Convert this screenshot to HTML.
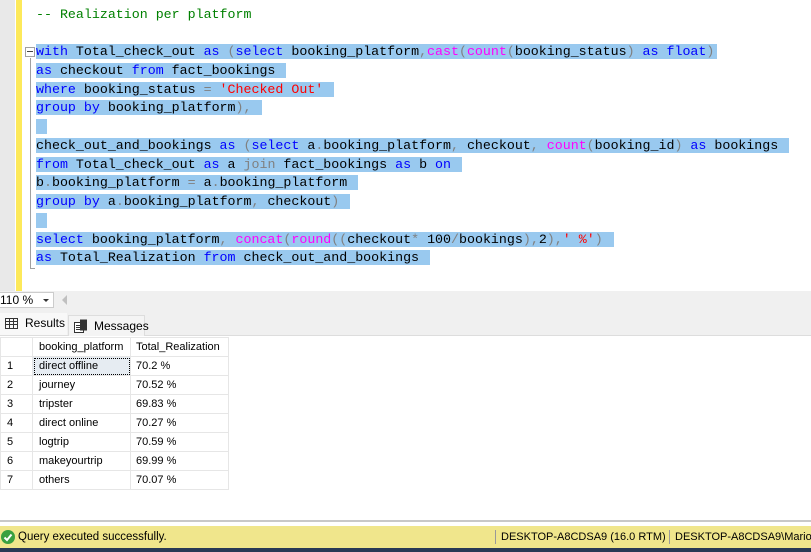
<!DOCTYPE html>
<html><head><meta charset="utf-8"><style>
*{margin:0;padding:0;box-sizing:border-box}
body{width:811px;height:552px;overflow:hidden;background:#fff;position:relative;font-family:"Liberation Sans",sans-serif}
.gut{position:absolute;left:0;top:0;width:15px;height:291px;background:#e9e9e9}
.yel{position:absolute;left:16px;top:0;width:6px;height:291px;background:#fde95a}
.vl{position:absolute;left:30px;top:58px;width:1px;height:211px;background:#a0a0a0}
.tick{position:absolute;left:30px;top:268px;width:5px;height:1px;background:#a0a0a0}
.box{position:absolute;left:25px;top:47px;width:10px;height:10px;border:1px solid #a0a0a0;background:#fff}
.box:after{content:"";position:absolute;left:1px;top:3px;width:6px;height:1px;background:#444}
.code{position:absolute;left:36px;top:5.5px;font-family:"Liberation Mono",monospace;font-size:13.3px;line-height:18.75px;color:#000}
.code div{height:18.75px;white-space:pre}
.s{background:#99c9ef;padding-right:3px}
.k{color:#0000ff}.f{color:#ff00ff}.g{color:#808080}.r{color:#ff0000}.c{color:#008000}
.zb{position:absolute;left:0;top:291px;width:811px;height:18px;background:#f0f0f0}
.combo{position:absolute;left:0;top:292px;width:54px;height:16px;background:#fff;border:1px solid #ccc;border-left:none;font-size:12px;line-height:14px}
.combo b{position:absolute;right:4px;top:6px;border-left:3px solid transparent;border-right:3px solid transparent;border-top:3px solid #333}
.tabs{position:absolute;left:0;top:309px;width:811px;height:27px;background:#f0f0f0;border-bottom:1px solid #ddd}
.tab{position:absolute;top:4px;height:22px;font-size:12px;line-height:20px}
.t1{left:0;width:67px;background:#f8f8f8;padding-left:25px}
.t2{left:68px;width:77px;top:6px;height:21px;background:#f4f4f4;border:1px solid #ddd;border-bottom:none;padding-left:25px}
table{position:absolute;left:0;top:337px;border-collapse:collapse;font-size:11px}
td{height:19px;border:1px solid #e6e6e6;padding-left:5px;color:#000;white-space:nowrap}
td:first-child{width:32px;padding-left:6px}
td:nth-child(2){width:98px;padding-left:6px}
td:nth-child(3){width:98px}
.sel{outline:1px dotted #000;outline-offset:-2px;background:#e6ecf2}
.sep{position:absolute;left:0;top:520px;width:811px;height:2px;background:#c8c8c8}
.st{position:absolute;left:0;top:526px;width:811px;height:22px;background:#f0e68c;font-size:11.5px;line-height:22px;overflow:hidden}
.st span{white-space:nowrap}
.dk{position:absolute;left:0;top:548px;width:811px;height:4px;background:#293955}
.chk{position:absolute;left:1px;top:4px;width:14px;height:14px;border-radius:50%;background:#3aa040}
</style></head><body>
<div class="gut"></div><div class="yel"></div><div class="vl"></div><div class="tick"></div><div class="box"></div>
<div class="code"><div><span class="c">-- Realization per platform</span></div><div></div><div><span class="s"><span class="k">with</span> Total_check_out <span class="k">as</span> <span class="g">(</span><span class="k">select</span> booking_platform<span class="g">,</span><span class="f">cast</span><span class="g">(</span><span class="f">count</span><span class="g">(</span>booking_status<span class="g">)</span> <span class="k">as</span> <span class="k">float</span><span class="g">)</span></span></div><div><span class="s"><span class="k">as</span> checkout <span class="k">from</span> fact_bookings </span></div><div><span class="s"><span class="k">where</span> booking_status <span class="g">=</span> <span class="r">'Checked Out'</span> </span></div><div><span class="s"><span class="k">group</span> <span class="k">by</span> booking_platform<span class="g">),</span> </span></div><div><span class="s"> </span></div><div><span class="s">check_out_and_bookings <span class="k">as</span> <span class="g">(</span><span class="k">select</span> a<span class="g">.</span>booking_platform<span class="g">,</span> checkout<span class="g">,</span> <span class="f">count</span><span class="g">(</span>booking_id<span class="g">)</span> <span class="k">as</span> bookings </span></div><div><span class="s"><span class="k">from</span> Total_check_out <span class="k">as</span> a <span class="g">join</span> fact_bookings <span class="k">as</span> b <span class="k">on</span> </span></div><div><span class="s">b<span class="g">.</span>booking_platform <span class="g">=</span> a<span class="g">.</span>booking_platform </span></div><div><span class="s"><span class="k">group</span> <span class="k">by</span> a<span class="g">.</span>booking_platform<span class="g">,</span> checkout<span class="g">)</span> </span></div><div><span class="s"> </span></div><div><span class="s"><span class="k">select</span> booking_platform<span class="g">,</span> <span class="f">concat</span><span class="g">(</span><span class="f">round</span><span class="g">((</span>checkout<span class="g">*</span> 100<span class="g">/</span>bookings<span class="g">),</span>2<span class="g">),</span><span class="r">' %'</span><span class="g">)</span> </span></div><div><span class="s"><span class="k">as</span> Total_Realization <span class="k">from</span> check_out_and_bookings </span></div></div>
<div class="zb"><span style="position:absolute;left:62px;top:4px;border-top:5px solid transparent;border-bottom:5px solid transparent;border-right:5px solid #c0c0c0"></span></div>
<div class="combo">110 %<b></b></div>
<div class="tabs">
<div class="tab t1"><svg style="position:absolute;left:5px;top:5px" width="13" height="11"><rect x="0.5" y="0.5" width="12" height="10" fill="none" stroke="#333"/><path d="M0 3.5H13M0 6.5H13M4.5 0V11M8.5 0V11" stroke="#333"/></svg>Results</div>
<div class="tab t2"><svg style="position:absolute;left:5px;top:3px" width="14" height="14"><rect x="0.5" y="3.5" width="9" height="10" fill="#fff" stroke="#333"/><rect x="6" y="0.5" width="7" height="11" fill="#333"/><path d="M2 6.5H8M2 8.5H8M2 10.5H8" stroke="#333"/></svg>Messages</div>
</div>
<table>
<tr><td></td><td>booking_platform</td><td>Total_Realization</td></tr>
<tr><td>1</td><td class="sel">direct offline</td><td>70.2 %</td></tr>
<tr><td>2</td><td>journey</td><td>70.52 %</td></tr>
<tr><td>3</td><td>tripster</td><td>69.83 %</td></tr>
<tr><td>4</td><td>direct online</td><td>70.27 %</td></tr>
<tr><td>5</td><td>logtrip</td><td>70.59 %</td></tr>
<tr><td>6</td><td>makeyourtrip</td><td>69.99 %</td></tr>
<tr><td>7</td><td>others</td><td>70.07 %</td></tr>
</table>
<div class="sep"></div>
<div class="st"><div class="chk"><svg width="14" height="14"><path d="M3.5 7.5L6 10L10.5 4.5" stroke="#fff" stroke-width="2" fill="none"/></svg></div>
<span style="position:absolute;left:18px">Query executed successfully.</span>
<span style="position:absolute;left:495px;top:4px;width:1px;height:14px;background:#999"></span>
<span style="position:absolute;left:501px;font-size:11px">DESKTOP-A8CDSA9 (16.0 RTM)</span>
<span style="position:absolute;left:669px;top:4px;width:1px;height:14px;background:#999"></span>
<span style="position:absolute;left:675px;font-size:11px">DESKTOP-A8CDSA9\Mario</span>
</div>
<div class="dk"></div>
</body></html>
